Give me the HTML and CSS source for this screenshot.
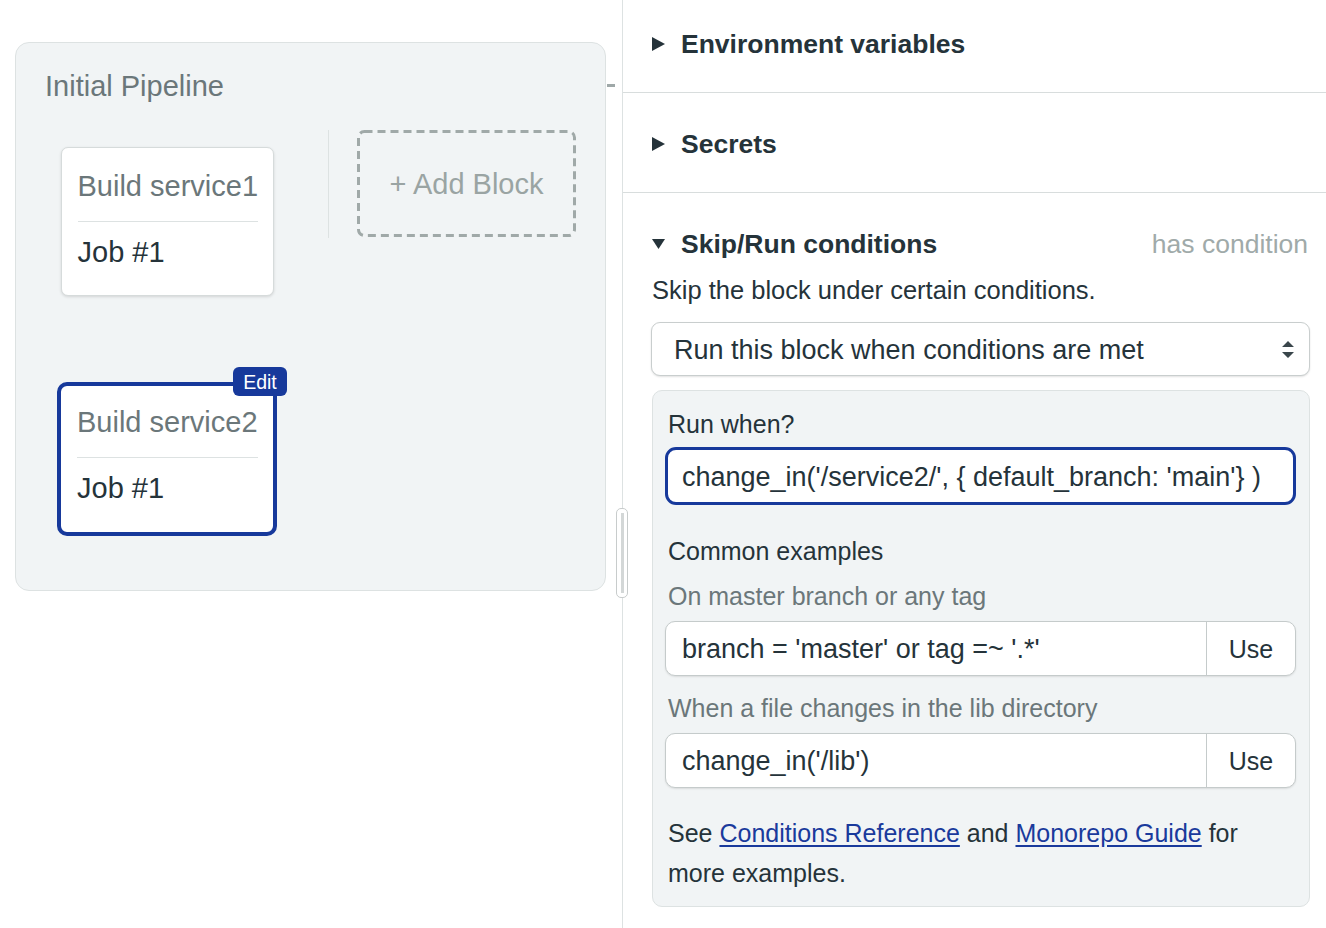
FILE: index.html
```html
<!DOCTYPE html>
<html lang="en">
<head>
<meta charset="utf-8">
<title>Pipeline editor</title>
<link rel="stylesheet" href="styles.css">
</head>
<body>
<div class="app">
  <div class="canvas">
    <div class="card">
      <div class="card-title">Initial Pipeline</div>
      <div class="card-row">
        <div class="col">
          <div class="block">
            <div class="block-title">Build service1</div>
            <div class="block-job">Job #1</div>
          </div>
          <div class="block block-selected">
            <div class="block-title">Build service2</div>
            <div class="block-job">Job #1</div>
            <span class="badge">Edit</span>
          </div>
        </div>
        <div class="col-sep"></div>
        <div class="add-block">
          <svg class="dash" width="219" height="107" viewBox="0 0 219 107"><rect x="1.5" y="1.5" width="216" height="104" rx="6" ry="6" fill="none" stroke="#a0a9a8" stroke-width="3" stroke-dasharray="8 5"/></svg>
          <span class="add-label">+ Add Block</span>
        </div>
      </div>
    </div>
    <span class="stub"></span>
  </div>
  <div class="side">
    <div class="section first">
      <div class="sec-head">
        <svg class="tri" width="13" height="14" viewBox="0 0 13 14"><path d="M0 0 L13 7 L0 14 Z"/></svg>
        <span>Environment variables</span>
      </div>
    </div>
    <div class="section">
      <div class="sec-head">
        <svg class="tri" width="13" height="14" viewBox="0 0 13 14"><path d="M0 0 L13 7 L0 14 Z"/></svg>
        <span>Secrets</span>
      </div>
    </div>
    <div class="section open">
      <div class="sec-head">
        <svg class="tri" width="13" height="10" viewBox="0 0 13 10"><path d="M0 0 H13 L6.5 10 Z"/></svg>
        <span>Skip/Run conditions</span>
        <span class="sec-note">has condition</span>
      </div>
      <p class="desc">Skip the block under certain conditions.</p>
      <div class="select">
        <span>Run this block when conditions are met</span>
        <svg width="12" height="17" viewBox="0 0 12 17"><path d="M6 0 L12 6 H0 Z M0 11 H12 L6 17 Z"/></svg>
      </div>
      <div class="panel">
        <div class="label">Run when?</div>
        <div class="input-main">change_in('/service2/', { default_branch: 'main'} )</div>
        <div class="label ex-head">Common examples</div>
        <div class="label muted">On master branch or any tag</div>
        <div class="group">
          <span class="group-input">branch = 'master' or tag =~ '.*'</span>
          <span class="group-btn">Use</span>
        </div>
        <div class="label muted gap">When a file changes in the lib directory</div>
        <div class="group">
          <span class="group-input">change_in('/lib')</span>
          <span class="group-btn">Use</span>
        </div>
        <p class="foot"><span>See</span> <a href="#">Conditions Reference</a> <span>and</span> <a href="#">Monorepo Guide</a> <span>for</span><br><span>more examples.</span></p>
      </div>
    </div>
  </div>
  <div class="handle"><span></span></div>
</div>
</body>
</html>
```

FILE: styles.css
```css
* { box-sizing: border-box; }
html, body { margin: 0; padding: 0; background: #fff; }
body {
  font-family: "Liberation Sans", Arial, sans-serif;
  color: #25333a;
  width: 1326px;
  height: 928px;
  overflow: hidden;
}
.app {
  position: relative;
  display: flex;
  height: 928px;
}
.canvas {
  position: relative;
  width: 623px;
  flex: none;
  border-right: 1px solid #dde2e2;
  padding: 42px 0 0 15px;
}
.card {
  width: 591px;
  height: 549px;
  background: #f1f4f5;
  border: 1px solid #dde2e2;
  border-radius: 14px;
  padding: 25px 29px 0 29px;
}
.card-title {
  font-size: 29px;
  line-height: 36px;
  color: #6b777a;
}
.card-row {
  display: flex;
  align-items: flex-start;
  margin-top: 26px;
}
.col {
  width: 244px;
  display: flex;
  flex-direction: column;
  align-items: center;
  padding-top: 17px;
}
.block {
  position: relative;
  width: 213px;
  background: #fff;
  border: 1px solid #d6dbdb;
  border-radius: 7px;
  box-shadow: 0 1px 3px rgba(0, 0, 0, 0.13);
}
.block-title {
  margin: 0 15px 0 16px;
  padding: 20px 0 17px;
  border-bottom: 1px solid #dde2e2;
  font-size: 29px;
  line-height: 36px;
  color: #6b777a;
  white-space: nowrap;
}
.block-job {
  padding: 12px 16px 25px;
  font-size: 29px;
  line-height: 36px;
  color: #25333a;
}
.block-selected {
  width: 220px;
  margin-top: 86px;
  border: 4px solid #17399b;
  border-radius: 10px;
  box-shadow: none;
}
.block-selected .block-title { padding-top: 18px; }
.block-selected .block-job { padding-bottom: 26px; }
.badge {
  position: absolute;
  top: -19px;
  right: -14px;
  width: 54px;
  height: 29px;
  background: #17399b;
  color: #fff;
  border-radius: 6px;
  font-size: 19.5px;
  line-height: 30px;
  text-align: center;
}
.col-sep {
  width: 1px;
  height: 108px;
  margin-left: 39px;
  background: #dde2e2;
}
.add-block {
  position: relative;
  width: 219px;
  height: 107px;
  margin-left: 28px;
  display: flex;
  align-items: center;
  justify-content: center;
}
.add-block .dash {
  position: absolute;
  left: 0;
  top: 0;
}
.add-label {
  font-size: 29px;
  line-height: 36px;
  color: #9aa4a3;
}
.stub {
  position: absolute;
  left: 607px;
  top: 84px;
  width: 8px;
  height: 3px;
  background: #9fa8a8;
}
.handle {
  position: absolute;
  left: 616px;
  top: 508px;
  width: 12px;
  height: 90px;
  background: #fff;
  border: 1px solid #c8cccc;
  border-radius: 5px;
  display: flex;
  justify-content: center;
  padding-top: 4px;
}
.handle span {
  width: 3px;
  height: 80px;
  background: #d3d7d7;
}
.side {
  flex: 1;
  min-width: 0;
}
.section {
  padding: 31px 16px 28px 29px;
  border-bottom: 1px solid #d8dddd;
}
.section.first { padding-top: 24px; }
.section.open { border-bottom: none; padding-bottom: 0; }
.sec-head {
  display: flex;
  align-items: center;
  font-size: 26.5px;
  font-weight: bold;
  line-height: 40px;
}
.tri {
  fill: #25333a;
  margin-right: 16px;
  flex: none;
}
.sec-note {
  margin-left: auto;
  margin-right: 2px;
  font-weight: normal;
  font-size: 26.5px;
  color: #a0aaa9;
}
.desc {
  margin: 8px 0 0;
  font-size: 25.5px;
  line-height: 36px;
}
.select {
  display: flex;
  align-items: center;
  justify-content: space-between;
  height: 54px;
  margin: 14px 0 0 -1px;
  padding: 0 15px 0 22px;
  background: #fff;
  border: 1px solid #c9cece;
  border-radius: 9px;
  box-shadow: 0 1px 2px rgba(0, 0, 0, 0.12);
  font-size: 27px;
}
.select span { padding-top: 3px; }
.select svg { fill: #3a464b; }
.panel {
  margin-top: 14px;
  background: #f1f4f5;
  border: 1px solid #dde2e2;
  border-radius: 10px;
  padding: 15px 13px 13px 12px;
}
.label {
  padding-left: 3px;
  font-size: 25px;
  line-height: 36px;
}
.muted { color: #6b777a; margin-top: 9px; }
.ex-head { margin-top: 28px; }
.gap { margin-top: 14px; }
.input-main {
  display: flex;
  align-items: center;
  height: 58px;
  margin-top: 5px;
  padding: 2px 0 0 14px;
  background: #fff;
  border: 3px solid #17399b;
  border-radius: 11px;
  font-size: 27px;
  white-space: nowrap;
}
.group {
  display: flex;
  height: 55px;
  margin-top: 7px;
  background: #fff;
  border: 1px solid #c5cbcb;
  border-radius: 10px;
  box-shadow: 0 1px 2px rgba(0, 0, 0, 0.1);
}
.group-input {
  flex: 1;
  display: flex;
  align-items: center;
  padding: 2px 0 0 16px;
  font-size: 27px;
  white-space: nowrap;
}
.group-btn {
  width: 89px;
  display: flex;
  align-items: center;
  justify-content: center;
  padding-top: 2px;
  border-left: 1px solid #c5cbcb;
  font-size: 25px;
}
.foot {
  margin: 25px 0 0;
  padding: 0 20px 0 3px;
  font-size: 25px;
  line-height: 40px;
}
.foot a {
  color: #1a3a9c;
  text-decoration: underline;
  text-underline-offset: 3px;
}
```
